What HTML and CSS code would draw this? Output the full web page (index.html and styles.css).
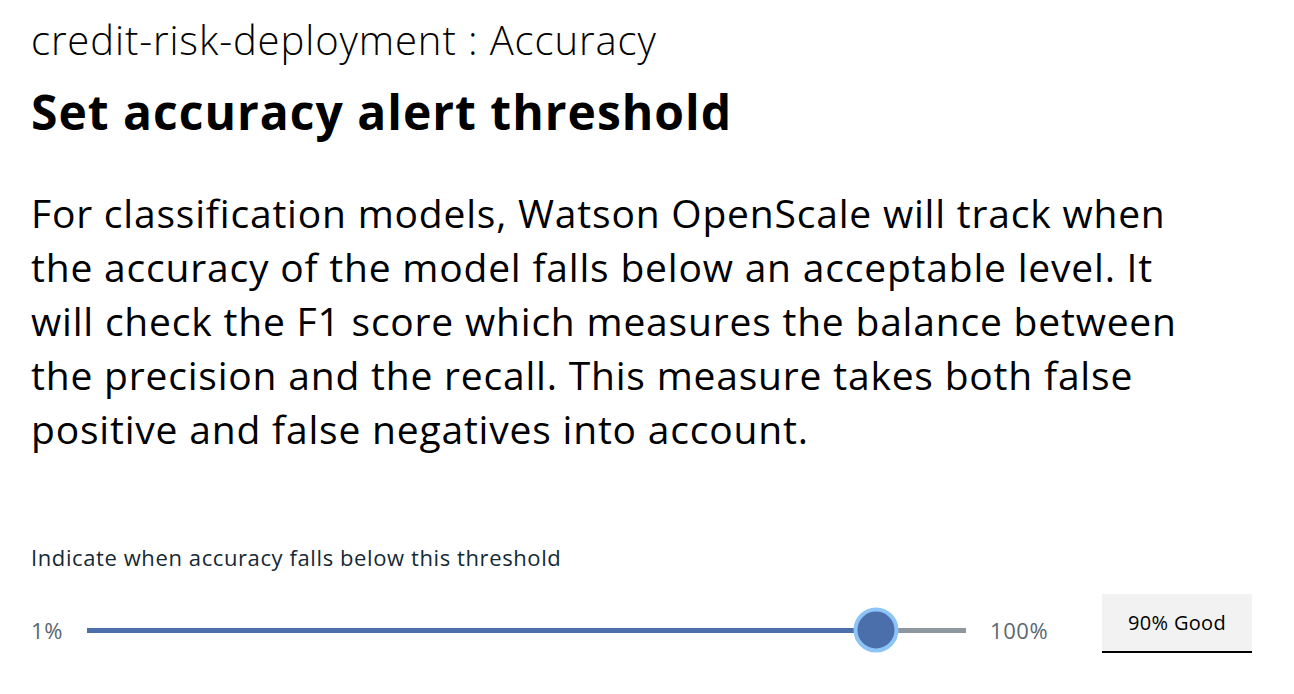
FILE: index.html
```html
<!DOCTYPE html>
<html lang="en">
<head>
<meta charset="utf-8">
<title>Set accuracy alert threshold</title>
<link rel="stylesheet" href="styles.css">
</head>
<body>
<main class="page">
  <h2 class="context">credit-risk-deployment : Accuracy</h2>
  <h1 class="title">Set accuracy alert threshold</h1>
  <p class="desc">For classification models, Watson OpenScale will track when<br>the accuracy of the model falls below an acceptable level. It<br>will check the F1 score which measures the balance between<br>the precision and the recall. This measure takes both false<br>positive and false negatives into account.</p>
  <section class="threshold">
    <label class="threshold-label">Indicate when accuracy falls below this threshold</label>
    <div class="slider-row">
      <span class="range-label min">1%</span>
      <div class="slider">
        <div class="track">
          <div class="fill" style="width: 89.8%"></div>
          <div class="thumb" style="left: 89.8%"></div>
        </div>
      </div>
      <span class="range-label max">100%</span>
      <div class="value-box">90% Good</div>
    </div>
  </section>
</main>
</body>
</html>
```

FILE: styles.css
```css
* { box-sizing: border-box; }
html, body { margin: 0; padding: 0; background: #fff; }
body {
  font-family: "Open Sans", "Noto Sans", sans-serif;
  color: #000;
}
.page {
  padding: 18px 0 0 31px;
  width: 1294px;
}
.context {
  margin: 0;
  font-size: 40px;
  font-weight: 300;
  letter-spacing: 0.9px;
  line-height: 44px;
}
.title {
  margin: 23px 0 0;
  font-size: 48px;
  font-weight: 700;
  letter-spacing: 1px;
  line-height: 54px;
}
.desc {
  margin: 47px 0 0;
  font-size: 39px;
  font-weight: 400;
  letter-spacing: 0.8px;
  line-height: 54px;
  color: #000;
}
.threshold {
  margin-top: 88px;
}
.threshold-label {
  display: block;
  font-size: 22px;
  letter-spacing: 0.6px;
  line-height: 26px;
  color: #152935;
}
.slider-row {
  margin-top: 24px;
  display: flex;
  align-items: center;
  height: 72px;
}
.range-label {
  font-size: 22px;
  letter-spacing: 0.6px;
  color: #5a6872;
}
.range-label.min { width: 56px; }
.range-label.max { width: 112px; }
.slider {
  width: 879px;
  margin-right: 24px;
}
.track {
  position: relative;
  height: 5px;
  background: #8c979f;
}
.fill {
  height: 100%;
  background: #4a6fab;
}
.thumb {
  position: absolute;
  top: 50%;
  width: 45px;
  height: 45px;
  border-radius: 50%;
  background: #4a6fab;
  border: 4px solid #8cc4f7;
  transform: translate(-50%, -50%);
}
.value-box {
  align-self: flex-start;
  width: 150px;
  height: 59px;
  background: #f2f2f2;
  border-bottom: 2px solid #000;
  display: flex;
  align-items: center;
  justify-content: center;
  font-size: 20px;
  letter-spacing: 0.3px;
  color: #000;
}
```
